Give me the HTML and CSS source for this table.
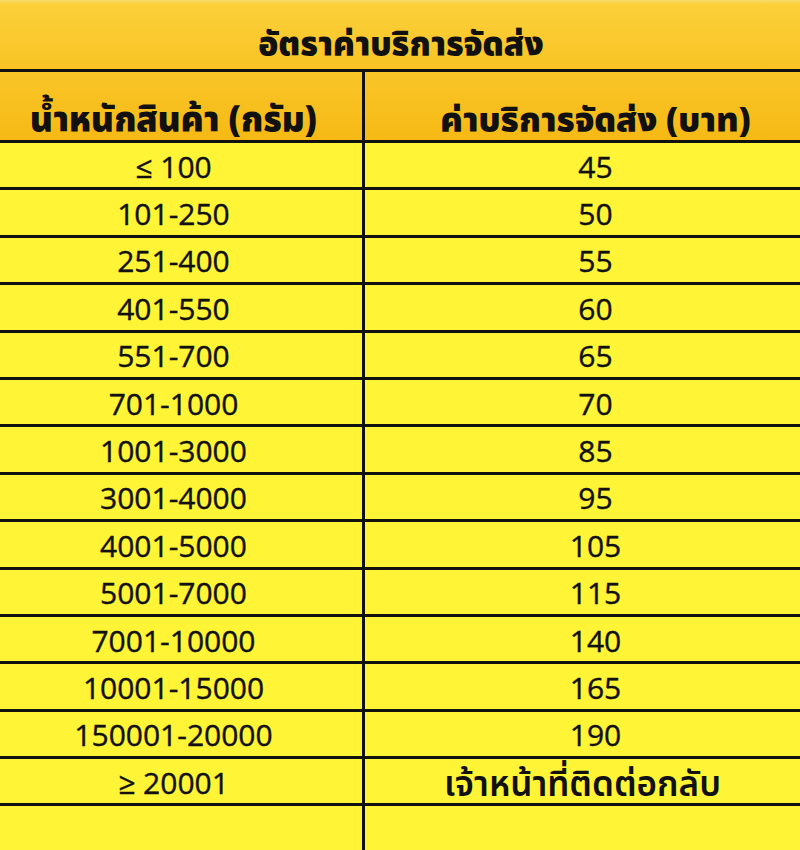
FILE: index.html
```html
<!DOCTYPE html>
<html lang="th">
<head>
<meta charset="utf-8">
<link rel="stylesheet" href="styles.css">
</head>
<body>
<div class="sheet">
  <div class="title">อัตราค่าบริการจัดส่ง</div>
  <div class="row head">
    <div class="cell left">น้ำหนักสินค้า (กรัม)</div>
    <div class="cell right">ค่าบริการจัดส่ง (บาท)</div>
  </div>
  <div class="row"><div class="cell left">≤ 100</div><div class="cell right">45</div></div>
  <div class="row"><div class="cell left">101-250</div><div class="cell right">50</div></div>
  <div class="row"><div class="cell left">251-400</div><div class="cell right">55</div></div>
  <div class="row"><div class="cell left">401-550</div><div class="cell right">60</div></div>
  <div class="row"><div class="cell left">551-700</div><div class="cell right">65</div></div>
  <div class="row"><div class="cell left">701-1000</div><div class="cell right">70</div></div>
  <div class="row"><div class="cell left">1001-3000</div><div class="cell right">85</div></div>
  <div class="row"><div class="cell left">3001-4000</div><div class="cell right">95</div></div>
  <div class="row"><div class="cell left">4001-5000</div><div class="cell right">105</div></div>
  <div class="row"><div class="cell left">5001-7000</div><div class="cell right">115</div></div>
  <div class="row"><div class="cell left">7001-10000</div><div class="cell right">140</div></div>
  <div class="row"><div class="cell left">10001-15000</div><div class="cell right">165</div></div>
  <div class="row"><div class="cell left">150001-20000</div><div class="cell right">190</div></div>
  <div class="row"><div class="cell left">≥ 20001</div><div class="cell right thai">เจ้าหน้าที่ติดต่อกลับ</div></div>
  <div class="row empty"><div class="cell left"></div><div class="cell right"></div></div>
</div>
</body>
</html>
```

FILE: styles.css
```css
html, body {
  margin: 0;
  padding: 0;
  background: #fff536;
}
.sheet {
  width: 800px;
  height: 850px;
  overflow: hidden;
  background: #fff536;
  color: #111;
  font-family: "Open Sans", "Noto Sans Thai", "Loma", "Garuda", "Tlwg Typo", sans-serif;
}
.title {
  height: 72px;
  border-bottom: 3px solid #111;
  background: linear-gradient(#f6dc6e 0, #fbd03a 4px, #f9c424 100%);
  display: flex;
  align-items: center;
  justify-content: center;
  padding-top: 24px;
  padding-left: 2px;
  box-sizing: border-box;
  font-family: "Noto Sans Thai", "Loma", "Garuda", "Tlwg Typo", sans-serif;
  font-weight: 900;
  font-size: 33px;
  line-height: 1;
}
.row {
  display: grid;
  grid-template-columns: 362px 3px 1fr;
  height: 47.4px;
  border-bottom: 3px solid #111;
  box-sizing: border-box;
}
.row .left { grid-column: 1; }
.row .right { grid-column: 3; }
.row::before {
  content: "";
  grid-column: 2;
  grid-row: 1;
  background: #111;
}
.cell {
  display: flex;
  align-items: center;
  justify-content: center;
  font-size: 30px;
  font-weight: 500;
  line-height: 1;
  padding-top: 3px;
  -webkit-text-stroke: 0.4px #111;
}
.left { padding-right: 15px; grid-row: 1; }
.right { padding-left: 26px; grid-row: 1; }
.head {
  height: 71px;
  background: linear-gradient(#f9c628, #f6b914);
}
.head .cell {
  font-family: "Noto Sans Thai", "Loma", "Garuda", "Tlwg Typo", sans-serif;
  font-weight: 900;
  font-size: 34.5px;
  padding-top: 31px;
  -webkit-text-stroke: 0;
}
.head .right { font-size: 34px; }
.row .thai {
  font-family: "Noto Sans Thai", "Loma", "Garuda", "Tlwg Typo", sans-serif;
  font-weight: 600;
  font-size: 35px;
  padding-left: 0;
  padding-top: 9px;
  -webkit-text-stroke: 0;
}
.empty { height: 60px; border-bottom: 0; }
```
